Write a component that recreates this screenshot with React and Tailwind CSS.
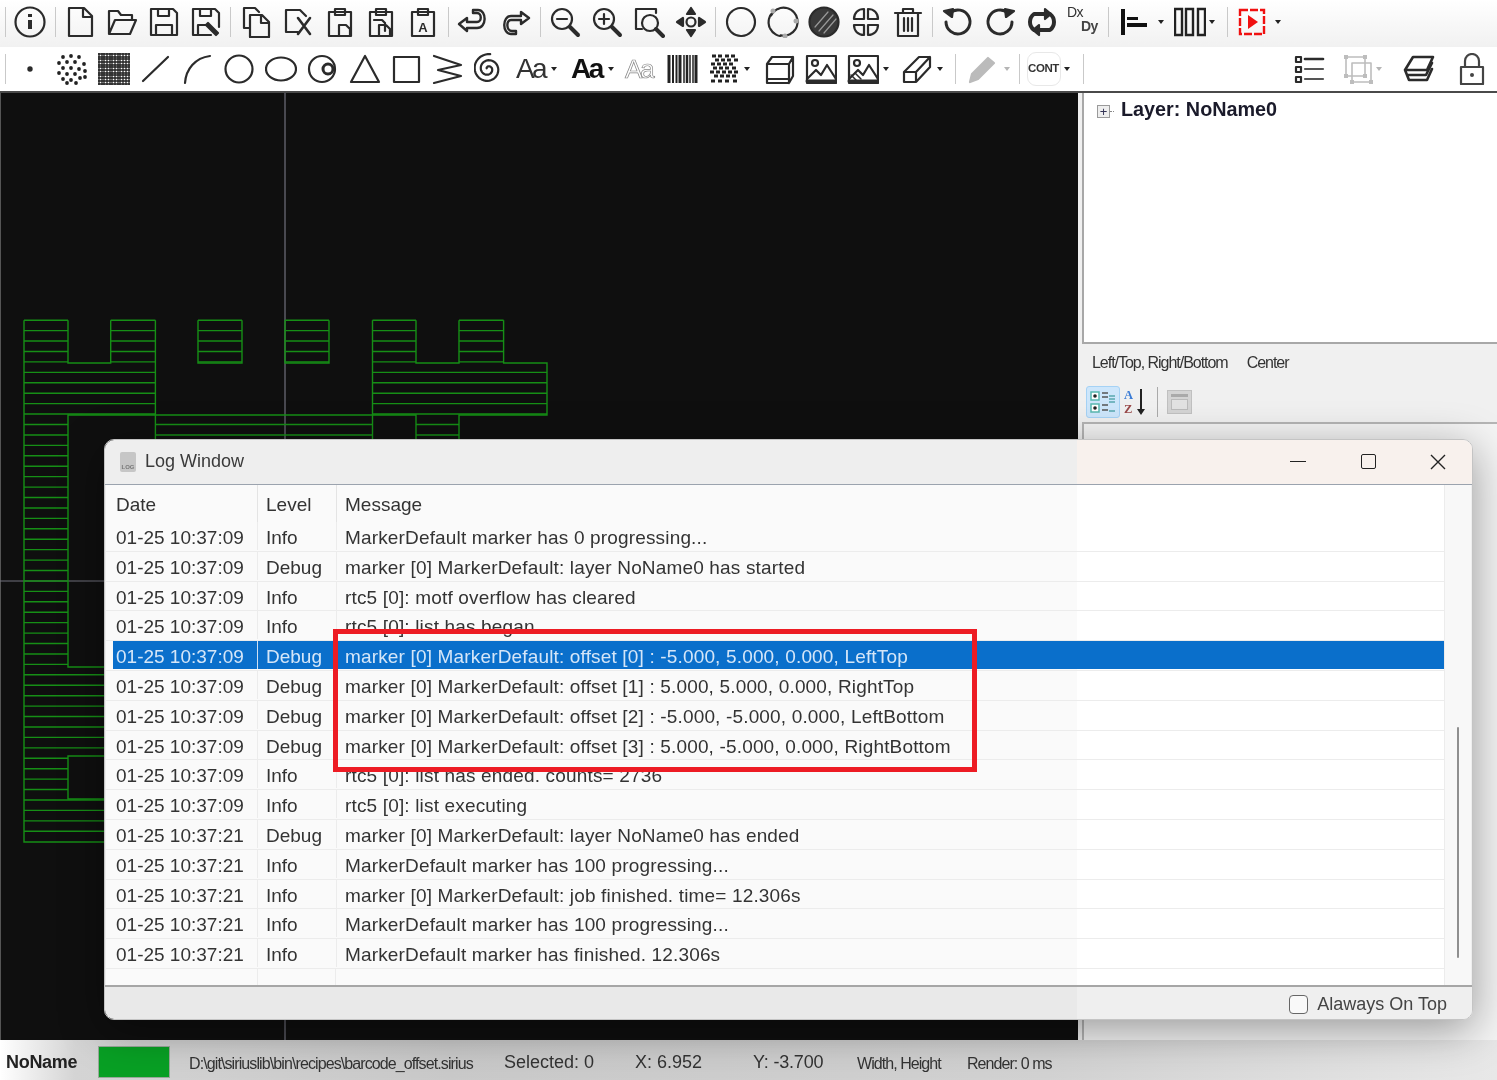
const Sep = () => (
  <div className="w-[8.35px] h-full flex items-center justify-center shrink-0">
    <div className="w-px h-[30px] bg-[#c9c9c9]"></div>
  </div>
);

const Caret = ({ light }) => (
  <div className={`w-0 h-0 border-x-[3.5px] border-x-transparent border-t-[4px] ${light ? "border-t-[#b5b5b5]" : "border-t-[#222]"}`}></div>
);

const Ico = ({ children, stroke = "#2b2b2b", sw = 2.2 }) => (
  <svg viewBox="0 0 32 32" className="w-8 h-8 shrink-0" fill="none" stroke={stroke} strokeWidth={sw} strokeLinecap="round" strokeLinejoin="round">
    {children}
  </svg>
);

const Btn = ({ children }) => (
  <div className="w-[41.8px] h-full flex items-center justify-center shrink-0">{children}</div>
);

const floppy = "M3 3h22l4 4v22H3z M10 3v7h11V3 M8 29V19h16v10";
const dots = [[7,4],[15,3],[23,4],[3,10],[11,9],[19,9],[28,11],[7,15],[15,15],[23,16],[29,18],[3,20],[11,21],[19,21],[7,26],[15,27],[24,25],[29,24],[11,30],[20,30]];
const noise = [[5,3],[11,3],[18,3],[24,3],[8,7],[14,7],[20,7],[27,7],[4,11],[10,11],[16,11],[22,11],[6,15],[12,15],[18,15],[25,15],[3,19],[9,19],[15,19],[21,19],[27,19],[7,23],[13,23],[19,23],[25,23],[4,28],[11,28],[18,28],[26,28]];
const gridLines = [1,4,6,9,12,14,17,20,22,25,28,31];
const spiralPath = "M" + Array.from({ length: 90 }, (_, i) => {
  const t = (i / 89) * Math.PI * 4.4;
  const r = 1.5 + (i / 89) * 13.5;
  return `${(14 + r * Math.cos(t + 3.6)).toFixed(1)} ${(16 + r * Math.sin(t + 3.6)).toFixed(1)}`;
}).join("L");

const icons = {
  info: <><circle cx="16" cy="16" r="14.5" /><path d="M16 14v9" strokeWidth="4" strokeLinecap="butt" /><path d="M16 8v3" strokeWidth="4" strokeLinecap="butt" /></>,
  file: <path d="M5 2h15l8 8v20H5z M19 2v9h9" />,
  open: <path d="M3 28V5h9l3 4h11v5 M3 28l6-14h21l-6 14z" />,
  save: <path d={floppy} />,
  saveAs: <><path d="M3 3h22l4 4v14 M3 3v26h18 M10 3v7h11V3 M8 29V19h9" /><path d="M18 17l10 10 -2 2 -10-10z" fill="#2b2b2b" /></>,
  copy: <path d="M4 2h11l4 4 M4 2v20h5 M10 9h12l7 7v15H10z M21 9v8h8" />,
  cut: <><path d="M4 4h14l6 6 M4 4v22h12" /><path d="M16 12l12 16 M28 12L16 28" strokeWidth="2.6" /></>,
  paste: <path d="M5 6h22v24H5z M11 3h10v6H11z M15 30v-11h7l4 4v7" />,
  paste2: <path d="M5 6h22v24H5z M11 3h10v6H11z M9 14h8l3 3v8 M14 19h7l4 4v7h-11z" />,
  pasteA: <><path d="M5 6h22v24H5z M11 3h10v6H11z" /><text x="16" y="26" textAnchor="middle" fontFamily="Liberation Sans" fontWeight="700" fontSize="13" fill="#2b2b2b" stroke="none">A</text></>,
  undo: <path d="M2 18l8-6v4h10c5 0 5-9 0-9h-4V4h5c9 0 9 18-1 18H10v3z" strokeWidth="2.4" />,
  redo: <path d="M30 12l-8-6v4H12C3 10 3 28 12 28h5v-3h-4C7 25 7 14 12 14h10v4z" strokeWidth="2.4" />,
  zoomOut: <><circle cx="13" cy="13" r="10" /><path d="M8 13h10" /><path d="M21 21l8 8" strokeWidth="4" /></>,
  zoomIn: <><circle cx="13" cy="13" r="10" /><path d="M8 13h10 M13 8v10" /><path d="M21 21l8 8" strokeWidth="4" /></>,
  zoomBox: <><path d="M3 3h20v4 M3 3v20h6" /><circle cx="17" cy="17" r="8" /><path d="M23 23l7 7" strokeWidth="4" /></>,
  pan: <><circle cx="16" cy="16" r="4.5" /><path d="M16 2l-4 6h8z M16 30l-4-6h8z M2 16l6-4v8z M30 16l-6-4v8z" fill="#2b2b2b" /></>,
  circle: <circle cx="16" cy="16" r="14" strokeDasharray="10 1" />,
  arc: <><path d="M8 5a14 14 0 1 1 0 22" strokeDasharray="8 1" transform="rotate(-25 16 16)" /><path d="M6 6a14 14 0 0 0 7 24" strokeDasharray="8 1" /><circle cx="29" cy="15" r="2.5" fill="#aaa" stroke="none" /><circle cx="18" cy="30" r="2.5" fill="#aaa" stroke="none" /><circle cx="6" cy="5" r="2.5" fill="#aaa" stroke="none" /></>,
  hatch: <><circle cx="16" cy="16" r="14.5" fill="#3a3a3a" stroke="#2b2b2b" /><path d="M7 21L20 6 M11 25L25 9 M16 27L28 13" stroke="#999" strokeWidth="1.2" /></>,
  split: <path d="M14 3v10H4C4 7 8 3 14 3z M18 3v10h10c0-6-4-10-10-10z M14 29V19H4c0 6 4 10 10 10z M18 29V19h10c0 6-4 10-10 10z" />,
  trash: <path d="M3 7h26 M11 7V3h10v4 M6 7v23h20V7 M12 12v13 M16 12v13 M20 12v13" />,
  rotL: <><path d="M8 7a12 12 0 1 1-4 9" strokeWidth="3" /><path d="M2 5l9-2-1 8z" fill="#2b2b2b" /></>,
  rotR: <><path d="M24 7a12 12 0 1 0 4 9" strokeWidth="3" /><path d="M30 5l-9-2 1 8z" fill="#2b2b2b" /></>,
  swap: <><path d="M8 24A10 10 0 0 1 8 8h14" strokeWidth="4" /><path d="M24 8a10 10 0 0 1 0 16H10" strokeWidth="4" /><path d="M19 3l6 5-6 5z M13 19l-6 5 6 5z" fill="#2b2b2b" /></>,
  point: <circle cx="16" cy="16" r="1.6" fill="#2b2b2b" />,
  dots: dots.map(([x, y], i) => <circle key={i} cx={x} cy={y} r="1.9" fill="#222" stroke="none" />),
  grid: <g stroke="#222" strokeWidth="1.3" strokeLinecap="butt">{gridLines.map((v) => <path key={v} d={`M${v} 0v32 M0 ${v}h32`} />)}</g>,
  line: <path d="M3 28L28 4" />,
  curve: <path d="M4 30C5 16 14 5 29 3" />,
  ring: <circle cx="16" cy="16" r="13.5" />,
  ellipse: <ellipse cx="16" cy="16" rx="15" ry="11.5" />,
  donut: <><circle cx="15" cy="16" r="13" /><circle cx="21" cy="16" r="5" strokeWidth="3" /></>,
  tri: <path d="M16 3L2 29h28z" />,
  square: <path d="M4 4h25v25H4z" />,
  zig: <path d="M2 3l27 9L6 17l23 6L2 30" />,
  spiral: <path d={spiralPath} />,
  barcode: <g stroke="#222" strokeLinecap="butt">{[[2,3],[6,2],[9.5,2],[13,3],[17,1.5],[20,2.5],[23,1.5],[26,1.5],[29,3]].map(([x, w]) => <path key={x} d={`M${x} 2v28`} strokeWidth={w} />)}</g>,
  noise: noise.map(([x, y], i) => <rect key={i} x={x - 2} y={y - 1.5} width="4" height="3" fill="#222" stroke="none" />),
  box: <path d="M3 11h22v19H3z M3 11l5-7h21v19l-4 7 M25 11l4-7 M3 26h22" />,
  image: <><path d="M2 3h29v27H2z" /><circle cx="10" cy="10" r="3" /><path d="M2 26l9-9 5 5 6-10 9 14" /><path d="M2 28h29" strokeWidth="3" /></>,
  image2: <><path d="M2 3h29v27H2z" /><circle cx="10" cy="10" r="3" /><path d="M2 26l9-9 5 5 6-10 9 14" /><path d="M4 22l6 6 M8 20l6 6" strokeWidth="1.5" /><path d="M2 28h29" strokeWidth="3" /></>,
  shape: <path d="M3 29V19L18 4h11v10L15 29z M3 19h12v10 M15 19L29 4" />,
  pencil: <path d="M4 29l2-8L22 5l6 5-16 16z" fill="#bbb" stroke="#bbb" />,
  list: <><path d="M3 4h5v5H3z M3 14h5v5H3z M3 24h5v5H3z" /><path d="M12 6h18" strokeWidth="2.6" /><path d="M12 16h18 M12 26h18" stroke="#555" strokeWidth="2.2" /></>,
  bound: <g stroke="#bdbdbd"><path d="M5 4h19v19H5z M11 10h19v19H11z" strokeWidth="1.6" />{[[5,4],[24,4],[5,23],[24,23],[30,29],[11,29]].map(([x, y]) => <rect key={x + "" + y} x={x - 2} y={y - 2} width="4" height="4" fill="#bdbdbd" stroke="none" />)}</g>,
  layers: <path d="M2 17L10 4h20l-6 13z M2 17l2 5h19l6-12 M4 22l2 5h18l5-11" strokeWidth="2.6" />,
  lock: <><path d="M5 14h22v17H5z" stroke="#444" /><path d="M9 14V8a7 7 0 0 1 14 0v6" stroke="#444" /><circle cx="16" cy="22" r="2" fill="#444" stroke="none" /></>,
};

const AlignIcon = () => (
  <svg viewBox="0 0 26 32" className="w-[26px] h-8" fill="#111" stroke="none">
    <rect x="0" y="3" width="4" height="26" /><rect x="6" y="11" width="11" height="3" /><rect x="6" y="17" width="20" height="4" />
  </svg>
);

const ColsIcon = () => (
  <svg viewBox="0 0 32 32" className="w-8 h-8" fill="none" stroke="#222" strokeWidth="2.4">
    <path d="M1 3h7v26H1z M12 3h7v26h-7z M24 3h7v26h-7z" />
  </svg>
);

const PlayIcon = () => (
  <svg viewBox="0 0 28 28" className="w-[28px] h-[28px]" fill="none" stroke="#f01010" strokeWidth="2.4">
    <path d="M2 2h24v24H2z" strokeDasharray="8 2" />
    <path d="M10 7l10 7-10 7z" fill="#f01010" stroke="none" />
  </svg>
);

const ToolbarTop = () => {
  const groups = [
    ["info"],
    ["file", "open", "save", "saveAs"],
    ["copy", "cut", "paste", "paste2", "pasteA"],
    ["undo", "redo"],
    ["zoomOut", "zoomIn", "zoomBox", "pan"],
    ["circle", "arc", "hatch", "split", "trash"],
    ["rotL", "rotR", "swap"],
  ];
  return (
    <div className="h-[47px] flex items-center pl-px pb-[4px] bg-gradient-to-b from-white to-[#f1f1f1]">
      {groups.map((g, i) => (
        <div key={i} className="flex items-center h-full">
          <Sep />
          {g.map((n) => (
            <Btn key={n}><Ico>{icons[n]}</Ico></Btn>
          ))}
        </div>
      ))}
      <Btn>
        <div className="w-[36px] h-[34px] ml-[3px] flex flex-col text-[14px] leading-[14px] text-[#333] font-['Liberation_Sans'] tracking-[-0.5px]">
          <span className="block">Dx</span>
          <span className="block pl-[14px] font-bold text-[#444]">Dy</span>
        </div>
      </Btn>
      <Sep />
      <div className="flex items-center gap-[11px] w-[61px] pl-[8px] shrink-0"><AlignIcon /><Caret /></div>
      <div className="flex items-center gap-[3px] shrink-0 w-[50px]"><ColsIcon /><Caret /></div>
      <Sep />
      <div className="flex items-center gap-[9px] pl-[6px] shrink-0"><PlayIcon /><Caret /></div>
    </div>
  );
};

const ToolbarBottom = () => (
  <div className="h-[46px] flex items-center pl-px bg-white border-b-2 border-[#4a4a4a]">
    <Sep />
    {["point", "dots", "grid", "line", "curve", "ring", "ellipse", "donut", "tri", "square", "zig", "spiral"].map((n) => (
      <Btn key={n}><Ico>{icons[n]}</Ico></Btn>
    ))}
    <div className="flex items-center w-[55px] shrink-0 pl-[5px] gap-[6px]">
      <span className="font-['Liberation_Sans'] text-[28px] leading-none tracking-[-2.5px] text-[#333]">Aa</span><Caret />
    </div>
    <div className="flex items-center w-[55px] shrink-0 pl-[5px] gap-[6px]">
      <span className="font-['Liberation_Sans'] font-bold text-[28px] leading-none tracking-[-2.5px] text-[#111]">Aa</span><Caret />
    </div>
    <div className="flex items-center w-[41px] pl-[4px] h-full shrink-0">
      <span className="font-['Liberation_Sans'] text-[26px] leading-none tracking-[-2px] text-transparent [-webkit-text-stroke:0.7px_#888]">Aa</span>
    </div>
    <Btn><Ico>{icons.barcode}</Ico></Btn>
    <div className="flex items-center w-[55px] shrink-0 pl-[5px] gap-[3px]"><Ico>{icons.noise}</Ico><Caret /></div>
    <Btn><Ico>{icons.box}</Ico></Btn>
    <Btn><Ico>{icons.image}</Ico></Btn>
    <div className="flex items-center w-[54px] shrink-0 pl-[5px] gap-[4px]"><Ico>{icons.image2}</Ico><Caret /></div>
    <div className="flex items-center w-[55px] shrink-0 pl-[5px] gap-[4px]"><Ico>{icons.shape}</Ico><Caret /></div>
    <Sep />
    <div className="flex items-center w-[56px] shrink-0 pl-[6px] gap-[6px]"><Ico>{icons.pencil}</Ico><Caret light /></div>
    <Sep />
    <div className="relative flex items-center w-[55px] shrink-0 pl-[4px] gap-[5px]">
      <div className="absolute left-[3px] top-[-8px] w-[34px] h-[34px] rounded-[9px] border border-[#e8e8e8]"></div>
      <span className="relative font-['Liberation_Sans'] font-bold text-[11.5px] text-[#333] tracking-[-0.4px]">CONT</span>
      <Caret />
    </div>
    <Sep />
    <div className="ml-auto flex items-center h-full pr-[9px]">
      <Ico>{icons.list}</Ico>
      <div className="flex items-center ml-[16px] gap-[3px] w-[62px]"><Ico>{icons.bound}</Ico><Caret light /></div>
      <Ico>{icons.layers}</Ico>
      <div className="ml-[21px]"><Ico>{icons.lock}</Ico></div>
    </div>
  </div>
);

// hatch segments of the marker preview
const hatchSegs = (y) => {
  if (y < 363) return [[24, 68], [110.7, 155.4], [198, 242], [285, 329], [372.5, 416], [459, 503.6]];
  if (y < 415) return [[24, 155.4], [372.5, 547]];
  if (y < 439) return [[24, 68], [155.4, 372.5], [416, 459]];
  if (y < 667) return [[24, 68]];
  if (y < 756) return [[24, 104]];
  if (y < 799) return [[24, 68]];
  return [[24, 104]];
};

const outline = [
  "M24 320.2V842H104", "M68 320.2V363H110.7V320.2", "M155.4 320.2V439", "M198 320.2V363H242V320.2", "M285 320.2V363H329V320.2",
  "M372.5 320.2V439", "M416 320.2V363H459V320.2", "M503.6 320.2V363H547V415H459V439", "M416 439V415H68V667H104", "M104 756H68V799H104",
];

const Preview = () => {
  const ys = Array.from({ length: 50 }, (_, i) => 320.2 + i * 10.43);
  return (
    <svg className="absolute -left-px top-0 w-[1078px] h-[947px]" viewBox="0 93 1078 947" fill="none">
      <path d="M285 93V1040 M0 581H1078" stroke="#70707c" strokeWidth="1.2" />
      <g stroke="#168f16" strokeWidth="1.4">
        {ys.map((y) => hatchSegs(y).map(([a, b]) => <path key={y + "-" + a} d={`M${a} ${y}H${b}`} />))}
        {outline.map((d) => <path key={d} d={d} />)}
      </g>
    </svg>
  );
};

const PropsToolbar = () => (
  <div className="h-[41px] flex items-center pl-[4px] gap-[4px]">
    <div className="w-[34px] h-[32px] rounded-[3px] bg-[#cde6fb] border border-[#a5d2f5] flex items-center justify-center">
      <svg viewBox="0 0 28 26" className="w-[28px] h-[26px]" fill="none">
        <rect x="2" y="3" width="8" height="8" fill="#fff" stroke="#58b8b0" strokeWidth="1.5" /><rect x="2" y="15" width="8" height="8" fill="#fff" stroke="#58b8b0" strokeWidth="1.5" />
        <circle cx="6" cy="7" r="1.8" fill="#222" /><circle cx="6" cy="19" r="1.8" fill="#222" />
        <path d="M13 4h6 M13 8h6 M13 16h6 M13 21h6" stroke="#555" strokeWidth="1.5" /><path d="M20 7h6 M20 10h6 M20 13h6 M20 22h6" stroke="#58a8b0" strokeWidth="1.5" />
      </svg>
    </div>
    <div className="w-[27px] h-[32px] flex items-center font-['Liberation_Serif'] font-bold">
      <div className="flex flex-col text-[12.5px] leading-[14px]">
        <span className="block text-[#3a7bd5]">A</span>
        <span className="block text-[#9a4a4a]">Z</span>
      </div>
      <svg viewBox="0 0 10 28" className="w-[10px] h-[28px] ml-[3px]" fill="#222"><path d="M4 1h2v20h3l-4 6-4-6h3z" /></svg>
    </div>
    <div className="w-px h-[30px] bg-[#aaa] mx-[2px]"></div>
    <div className="w-[25px] h-[24px] ml-[3px] bg-[#d4d4d4] border border-[#c0c0c0] flex flex-col p-[3px] gap-[2px]">
      <div className="h-[3px] bg-[#aaa]"></div>
      <div className="flex-1 border border-[#bbb] bg-[#e2e2e2]"></div>
    </div>
  </div>
);

const RightPanel = () => (
  <div className="w-[419px] shrink-0 flex flex-col bg-[#f0f0f0] pl-[4px]">
    <div className="h-[251px] bg-white border-l-2 border-b-2 border-[#a8a8a8] flex items-start pt-[4px] pl-[13px]">
      <div className="mt-[8px] w-[13px] h-[13px] border border-[#9a9a9a] bg-[#eee] flex items-center justify-center text-[#335] text-[13px] leading-none font-['Liberation_Sans']">+</div>
      <div className="mt-[14px] w-[4px] border-t border-dotted border-[#888]"></div>
      <span className="font-['Liberation_Sans'] font-bold text-[19.8px] leading-[24px] text-[#1a1a2a] ml-[7px]">Layer: NoName0</span>
    </div>
    <div className="h-[37px] flex items-center pl-[10px] gap-[19px] font-['Liberation_Sans'] text-[16px] tracking-[-1.03px] text-[#333]">
      <span>Left/Top, Right/Bottom</span>
      <span>Center</span>
    </div>
    <PropsToolbar />
    <div className="flex-1 border-l-2 border-t-2 border-[#b5b5b5] bg-[#f4f4f4]"></div>
  </div>
);

const StatusBar = () => (
  <div className="h-[40px] flex items-center pl-[6px] pt-[4px] bg-[linear-gradient(90deg,#ffffff_0%,#d4d4d4_5%,#c9c9c9_30%,#d2d2d2_70%,#e8e8e8_100%)] font-['Liberation_Sans'] text-[#333] whitespace-nowrap">
    <span className="w-[92px] font-bold text-[18px] tracking-[-0.3px] text-[#222]">NoName</span>
    <div className="w-[72px] h-[32px] bg-[#08a024] border border-[#9aa89a]"></div>
    <span className="ml-[19px] mt-[3px] w-[315px] text-[16px] tracking-[-0.9px]">D:\git\siriuslib\bin\recipes\barcode_offset.sirius</span>
    <span className="w-[131px] text-[18px]">Selected: 0</span>
    <span className="w-[118px] text-[18px]">X: 6.952</span>
    <span className="w-[104px] text-[18px] tracking-[-0.2px]">Y: -3.700</span>
    <span className="w-[110px] mt-[3px] text-[16px] tracking-[-0.95px]">Width, Height</span>
    <span className="mt-[3px] text-[16px] tracking-[-0.95px]">Render: 0 ms</span>
  </div>
);

const logs = [
  ["01-25 10:37:09", "Info", "MarkerDefault marker has 0 progressing..."],
  ["01-25 10:37:09", "Debug", "marker [0] MarkerDefault: layer NoName0 has started"],
  ["01-25 10:37:09", "Info", "rtc5 [0]: motf overflow has cleared"],
  ["01-25 10:37:09", "Info", "rtc5 [0]: list has began ..."],
  ["01-25 10:37:09", "Debug", "marker [0] MarkerDefault: offset [0] : -5.000, 5.000, 0.000, LeftTop"],
  ["01-25 10:37:09", "Debug", "marker [0] MarkerDefault: offset [1] : 5.000, 5.000, 0.000, RightTop"],
  ["01-25 10:37:09", "Debug", "marker [0] MarkerDefault: offset [2] : -5.000, -5.000, 0.000, LeftBottom"],
  ["01-25 10:37:09", "Debug", "marker [0] MarkerDefault: offset [3] : 5.000, -5.000, 0.000, RightBottom"],
  ["01-25 10:37:09", "Info", "rtc5 [0]: list has ended. counts= 2736"],
  ["01-25 10:37:09", "Info", "rtc5 [0]: list executing"],
  ["01-25 10:37:21", "Debug", "marker [0] MarkerDefault: layer NoName0 has ended"],
  ["01-25 10:37:21", "Info", "MarkerDefault marker has 100 progressing..."],
  ["01-25 10:37:21", "Info", "marker [0] MarkerDefault: job finished. time= 12.306s"],
  ["01-25 10:37:21", "Info", "MarkerDefault marker has 100 progressing..."],
  ["01-25 10:37:21", "Info", "MarkerDefault marker has finished. 12.306s"],
];

const LogRow = ({ row, selected }) => (
  <div className="h-[29.8px] pl-[7px] border-b border-[#ececec]">
    <div className={`flex h-[28px] items-center ${selected ? "bg-[#0a6fcb] text-[#d5e6f8]" : "text-[#333]"}`}>
      <span className="w-[144px] pl-[3px] pt-[3px]">{row[0]}</span>
      <span className={`w-[79px] pl-[8px] pt-[3px] h-full flex items-center border-l ${selected ? "border-[#cfe0f2]" : "border-[#ececec]"}`}>{row[1]}</span>
      <span className={`flex-1 pl-[8px] pt-[3px] h-full flex items-center border-l tracking-[0.16px] ${selected ? "border-[#cfe0f2]" : "border-[#ececec]"}`}>{row[2]}</span>
    </div>
  </div>
);

const LogWindow = () => (
  <div className="absolute left-[104px] top-[439px] w-[1369px] h-[581px] rounded-[10px] flex flex-col overflow-hidden border border-[#c4c4c4] shadow-[0_10px_44px_rgba(0,0,0,0.38)] font-['Liberation_Sans']">
    <div className="h-[45px] shrink-0 flex items-center pl-[15px] pb-[1px] border-b border-[#9ba3ae] bg-[linear-gradient(90deg,#eeeeee_71.1%,#f8f1ed_71.1%)]">
      <div className="w-[16px] h-[20px] rounded-[2px] bg-[#c6c6c6] flex items-end justify-center pb-[2px] text-[6px] font-bold text-[#777] leading-none">LOG</div>
      <span className="ml-[9px] text-[18px] text-[#3a3a3a]">Log Window</span>
      <div className="ml-auto flex items-center -mr-px text-[#222]">
        <div className="w-[70px] flex justify-center"><div className="w-[16px] h-px bg-[#222]"></div></div>
        <div className="w-[70px] flex justify-center"><div className="w-[15px] h-[15px] border-[1.5px] border-[#222] rounded-[2px]"></div></div>
        <div className="w-[70px] flex justify-center">
          <svg viewBox="0 0 16 16" className="w-[16px] h-[16px]" stroke="#222" strokeWidth="1.4"><path d="M1 1l14 14 M15 1L1 15" /></svg>
        </div>
      </div>
    </div>
    <div className="flex-1 flex bg-[#eeeeee] px-px">
      <div className="flex-1 flex bg-[linear-gradient(90deg,#fafafa_71.1%,#ffffff_71.1%)] text-[19px] leading-none">
        <div className="w-[1338px] flex flex-col">
          <div className="h-[37px] pl-[7px] flex items-center text-[#333] shrink-0">
            <span className="w-[144px] pl-[3px] pt-[2px]">Date</span>
            <span className="w-[79px] pl-[8px] pt-[2px] h-full flex items-center border-l border-[#e4e4e4]">Level</span>
            <span className="pl-[8px] pt-[2px] h-full flex items-center border-l border-[#e4e4e4]">Message</span>
          </div>
          {logs.map((row, i) => (
            <LogRow key={i} row={row} selected={i === 4} />
          ))}
          <div className="flex-1 pl-[7px] flex">
            <div className="w-[144px]"></div>
            <div className="w-[79px] border-x border-[#ececec]"></div>
          </div>
        </div>
        <div className="flex-1 bg-[#f8f8f8] border-l border-[#ececec]">
          <div className="w-[2px] h-[231px] mt-[242px] ml-[12px] rounded-full bg-[#8f8f8f]"></div>
        </div>
      </div>
    </div>
    <div className="h-[34px] shrink-0 border-t-2 border-[#a6a6a6] flex items-center justify-end pr-[25px] pt-[2px] text-[18px] text-[#444] bg-[linear-gradient(90deg,#e9e9e9_71.1%,#efefef_71.1%)]">
      <div className="w-[19px] h-[19px] rounded-[4px] border-[1.5px] border-[#666] bg-white/60 mr-[9px]"></div>
      <span>Alaways On Top</span>
    </div>
  </div>
);

export default function App() {
  return (
    <div className="relative w-[1497px] h-[1080px] overflow-hidden flex flex-col bg-white blur-[0.35px]">
      <ToolbarTop />
      <ToolbarBottom />
      <div className="flex-1 flex min-h-0">
        <div className="relative w-[1078px] shrink-0 bg-[#0f0f0f] border-l border-[#555]">
          <Preview />
        </div>
        <RightPanel />
      </div>
      <StatusBar />
      <LogWindow />
      <div className="absolute left-[333px] top-[629px] w-[644px] h-[143px] border-[5px] border-[#ed1c24]"></div>
    </div>
  );
}
